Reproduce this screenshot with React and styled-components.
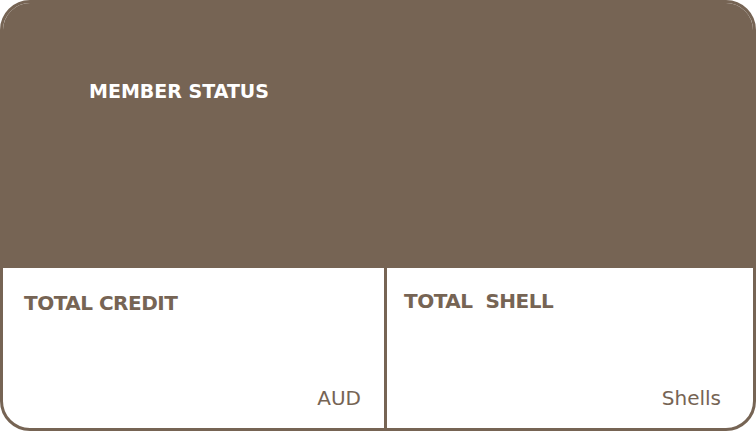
import styled, { createGlobalStyle } from 'styled-components';

const BROWN = '#766454';

const GlobalStyle = createGlobalStyle`
	html, body {
		margin: 0;
		padding: 0;
		background: #ffffff;
	}
	body {
		font-family: 'DejaVu Sans', 'Noto Sans', sans-serif;
	}
`;

const Card = styled.div`
	box-sizing: border-box;
	width: 756px;
	height: 431px;
	border: 3px solid ${BROWN};
	border-radius: 30px;
	overflow: hidden;
	background: #ffffff;
	display: flex;
	flex-direction: column;
`;

const StatusBar = styled.div`
	box-sizing: border-box;
	height: 265px;
	flex-shrink: 0;
	background: ${BROWN};
	padding: 77px 0 0 86px;
`;

const StatusTitle = styled.h2`
	margin: 0;
	color: #ffffff;
	font-size: 19px;
	font-weight: 700;
	line-height: 1.2;
`;

const Totals = styled.div`
	flex: 1;
	display: grid;
	grid-template-columns: 381px 3px 1fr;
`;

const Divider = styled.div`
	background: ${BROWN};
`;

const Panel = styled.div`
	box-sizing: border-box;
	display: flex;
	flex-direction: column;
	justify-content: space-between;
	padding: ${({ $pad }) => $pad};
	color: ${BROWN};
`;

const PanelTitle = styled.div`
	font-size: 20px;
	font-weight: 700;
	letter-spacing: -0.5px;
	line-height: 1.2;
`;

const Unit = styled.div`
	align-self: flex-end;
	font-size: 20px;
	font-weight: 400;
	line-height: 1.2;
`;

export default function App() {
	return (
		<>
			<GlobalStyle />
			<Card>
				<StatusBar>
					<StatusTitle>MEMBER STATUS</StatusTitle>
				</StatusBar>
				<Totals>
					<Panel $pad="23px 23px 18px 21px">
						<PanelTitle>TOTAL CREDIT</PanelTitle>
						<Unit>AUD</Unit>
					</Panel>
					<Divider />
					<Panel $pad="21px 32px 18px 17px">
						<PanelTitle>TOTAL&nbsp; SHELL</PanelTitle>
						<Unit>Shells</Unit>
					</Panel>
				</Totals>
			</Card>
		</>
	);
}
